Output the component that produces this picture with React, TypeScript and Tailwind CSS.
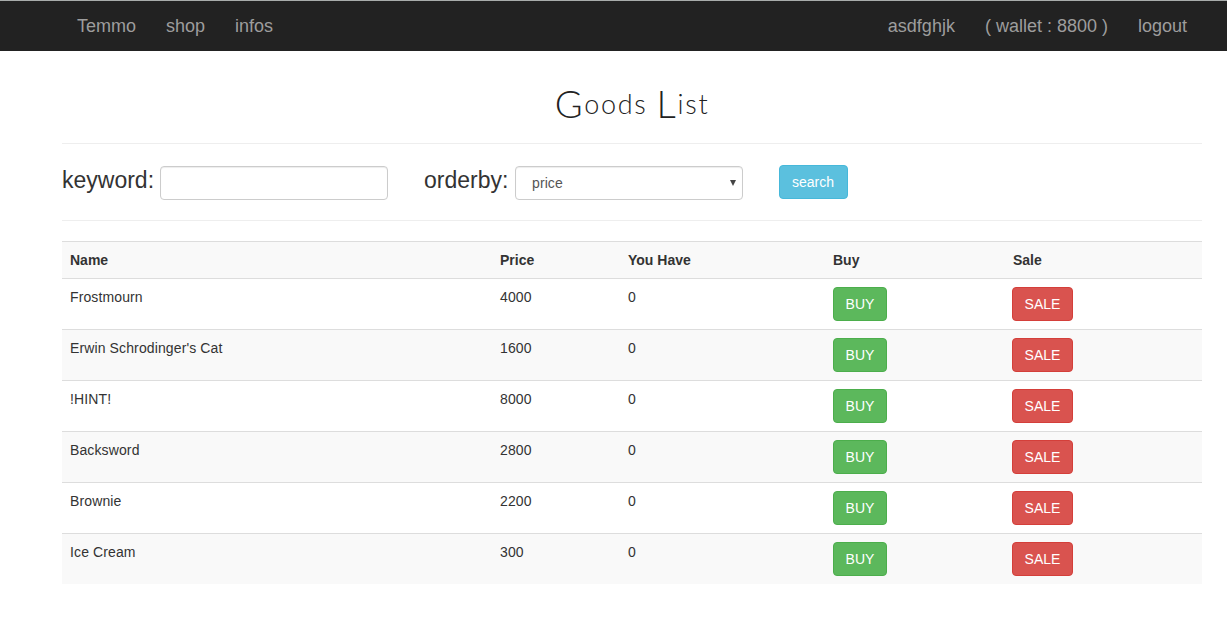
const goods = [
  { name: 'Frostmourn', price: 4000, owned: 0 },
  { name: "Erwin Schrodinger's Cat", price: 1600, owned: 0 },
  { name: '!HINT!', price: 8000, owned: 0 },
  { name: 'Backsword', price: 2800, owned: 0 },
  { name: 'Brownie', price: 2200, owned: 0 },
  { name: 'Ice Cream', price: 300, owned: 0 },
];

function Navbar() {
  return (
    <nav className="flex h-[51px] items-center justify-between border-t border-[#a8acab] bg-[#222] pr-[40px] pl-[77px] text-[18px] leading-5 text-[#9d9d9d]">
      <div className="flex gap-[30px]">
        <a href="#">Temmo</a>
        <a href="#">shop</a>
        <a href="#">infos</a>
      </div>
      <div className="flex gap-[30px]">
        <a href="#">asdfghjk</a>
        <a href="#">( wallet : 8800 )</a>
        <a href="#">logout</a>
      </div>
    </nav>
  );
}

function SearchForm() {
  return (
    <form className="flex h-[76px] items-start pt-[21px]" onSubmit={(e) => e.preventDefault()}>
      <label className="flex w-[362px] items-start text-[23px] leading-[30px]">
        <span className="w-[98px] shrink-0 whitespace-nowrap">keyword:</span>
        <input className="mt-px h-[34px] w-[228px] rounded-[4px] border border-[#ccc] bg-white px-3 text-sm shadow-[inset_0_1px_1px_rgba(0,0,0,0.075)]" />
      </label>
      <label className="flex w-[355px] items-start text-[23px] leading-[30px]">
        <span className="w-[91px] shrink-0 whitespace-nowrap">orderby:</span>
        <span className="mt-px flex h-[34px] w-[228px] items-center justify-between rounded-[4px] border border-[#ccc] bg-white pr-[6px] pl-4 text-sm tracking-[0.1px] text-[#555] shadow-[inset_0_1px_1px_rgba(0,0,0,0.075)]">
          price
          <svg width="6" height="6" viewBox="0 0 6 6" fill="#444">
            <path d="M0 0h6L3 6z" />
          </svg>
        </span>
      </label>
      <button className="h-[34px] w-[69px] rounded-[4px] border border-[#46b8da] bg-[#5bc0de] pr-px text-sm text-white">search</button>
    </form>
  );
}

function GoodsTable() {
  return (
    <table className="mt-5 w-full table-fixed border-separate border-spacing-0 text-left text-sm leading-5">
      <colgroup>
        <col className="w-[430px]" />
        <col className="w-[128px]" />
        <col className="w-[205px]" />
        <col className="w-[179px]" />
        <col />
      </colgroup>
      <thead>
        <tr className="h-[37px] bg-[#f9f9f9]">
          {['Name', 'Price', 'You Have', 'Buy', 'Sale'].map((title) => (
            <th key={title} className="border-t border-[#ddd] px-2 py-0 font-bold last:pl-[9px]">
              {title}
            </th>
          ))}
        </tr>
      </thead>
      <tbody>
        {goods.map((item) => (
          <tr key={item.name} className="h-[51px] align-top tracking-[0.12px] even:bg-[#f9f9f9]">
            <td className="border-t border-[#ddd] px-2 pt-2">{item.name}</td>
            <td className="border-t border-[#ddd] px-2 pt-2">{item.price}</td>
            <td className="border-t border-[#ddd] px-2 pt-2">{item.owned}</td>
            <td className="border-t border-[#ddd] px-2 pt-2">
              <button className="block h-[34px] w-[54px] rounded-[4px] border border-[#4cae4c] bg-[#5cb85c] tracking-normal text-white">BUY</button>
            </td>
            <td className="border-t border-[#ddd] px-2 pt-2">
              <button className="block h-[34px] w-[61px] rounded-[4px] border border-[#d43f3a] bg-[#d9534f] tracking-normal text-white">SALE</button>
            </td>
          </tr>
        ))}
      </tbody>
    </table>
  );
}

export default function App() {
  return (
    <div className="h-[624px] overflow-hidden bg-white font-['Liberation_Sans',Arial,sans-serif] text-[#333]">
      <Navbar />
      <main className="ml-[62px] w-[1140px]">
        <h1 className="h-[93px] border-b border-[#eee] pt-[33px] text-center font-[Papyrus,Lato,fantasy] text-[27px] leading-[40px] font-light tracking-[1.7px] text-[#222]">
          <span className="align-[-4px] text-[38px] leading-none">G</span>oods <span className="align-[-4px] text-[38px] leading-none">L</span>ist
        </h1>
        <div className="border-b border-[#eee]">
          <SearchForm />
        </div>
        <GoodsTable />
      </main>
    </div>
  );
}
